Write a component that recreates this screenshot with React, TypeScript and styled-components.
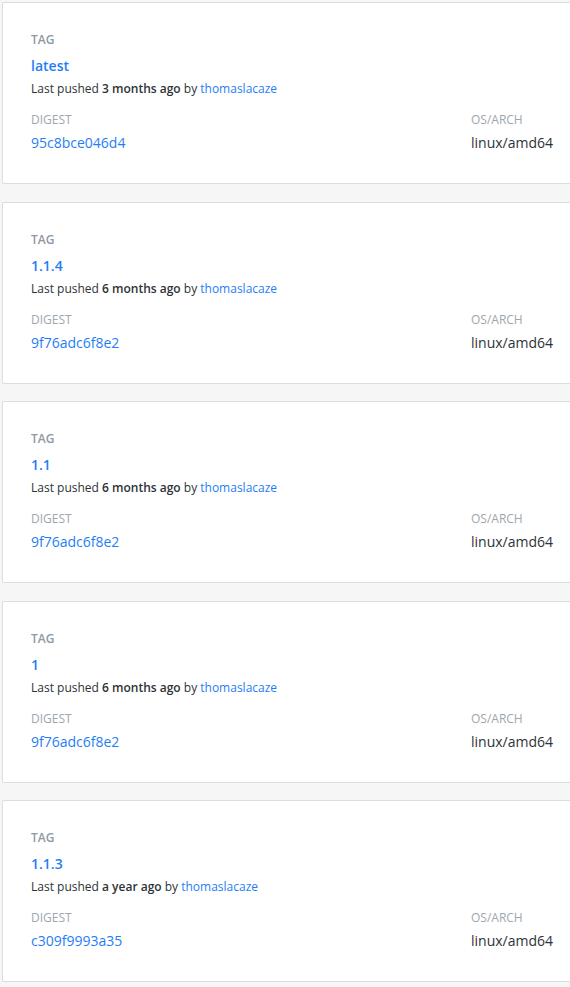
import React from "react";
import styled, { createGlobalStyle } from "styled-components";

const Global = createGlobalStyle`
  html, body { margin: 0; padding: 0; }
  body {
    background: #f6f6f6;
    font-family: "Open Sans", "Noto Sans", sans-serif;
    overflow: hidden;
  }
`;

const List = styled.div`
  display: flex;
  flex-direction: column;
  gap: 17.5px;
  padding: 2px 0 0 2px;
  width: 568px;
`;

const Card = styled.div`
  background: #ffffff;
  border: 1px solid #dcdde0;
  border-right: none;
  border-radius: 2px 0 0 2px;
  padding: 29px 0 30px 28px;
`;

const Label = styled.div<{ $strong?: boolean }>`
  font-size: 12px;
  line-height: 16px;
  text-transform: uppercase;
  font-weight: ${(p) => (p.$strong ? 600 : 400)};
  color: ${(p) => (p.$strong ? "#8f99a3" : "#9ea6ae")};
`;

const TagName = styled.div`
  margin-top: 8px;
  font-size: 14px;
  line-height: 20px;
  font-weight: 600;
  color: #1f7ef5;
`;

const Pushed = styled.div`
  margin-top: 5px;
  font-size: 12px;
  line-height: 16px;
  color: #2c3338;
  b { font-weight: 600; }
`;

const Link = styled.span`
  color: #1f7ef5;
`;

const Meta = styled.div`
  margin-top: 15px;
  display: grid;
  grid-template-columns: 440px auto;
`;

const Value = styled.div<{ $link?: boolean }>`
  margin-top: 5px;
  font-size: 14px;
  line-height: 20px;
  color: ${(p) => (p.$link ? "#1f7ef5" : "#2c3338")};
`;

const tags = [
  { name: "latest", when: "3 months ago", digest: "95c8bce046d4" },
  { name: "1.1.4", when: "6 months ago", digest: "9f76adc6f8e2" },
  { name: "1.1", when: "6 months ago", digest: "9f76adc6f8e2" },
  { name: "1", when: "6 months ago", digest: "9f76adc6f8e2" },
  { name: "1.1.3", when: "a year ago", digest: "c309f9993a35" },
];

export default function App() {
  return (
    <>
      <Global />
      <List>
        {tags.map((t) => (
          <Card key={t.name}>
            <Label $strong>Tag</Label>
            <TagName>{t.name}</TagName>
            <Pushed>
              Last pushed <b>{t.when}</b> by <Link>thomaslacaze</Link>
            </Pushed>
            <Meta>
              <div>
                <Label>Digest</Label>
                <Value $link>{t.digest}</Value>
              </div>
              <div>
                <Label>OS/Arch</Label>
                <Value>linux/amd64</Value>
              </div>
            </Meta>
          </Card>
        ))}
      </List>
    </>
  );
}
